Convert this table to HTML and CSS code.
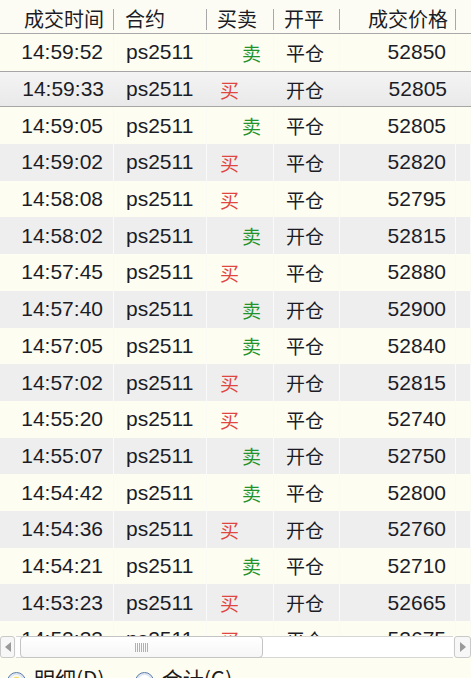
FILE: index.html
```html
<!DOCTYPE html>
<html>
<head>
<meta charset="utf-8">
<link rel="stylesheet" href="styles.css">
</head>
<body>
<div class="panel">
  <div class="row head">
    <div class="c c1"><span class="cn">成交时间</span></div>
    <div class="c c2"><span class="cn">合约</span></div>
    <div class="c c3"><span class="cn">买卖</span></div>
    <div class="c c4"><span class="cn">开平</span></div>
    <div class="c c5"><span class="cn">成交价格</span></div>
    <div class="c c6"></div>
  </div>
  <div class="body">
    <div class="row odd"><div class="c c1">14:59:52</div><div class="c c2">ps2511</div><div class="c c3 sell">卖</div><div class="c c4">平仓</div><div class="c c5">52850</div><div class="c c6"></div></div>
    <div class="row even sel"><div class="c c1">14:59:33</div><div class="c c2">ps2511</div><div class="c c3 buy">买</div><div class="c c4">开仓</div><div class="c c5">52805</div><div class="c c6"></div></div>
    <div class="row odd"><div class="c c1">14:59:05</div><div class="c c2">ps2511</div><div class="c c3 sell">卖</div><div class="c c4">平仓</div><div class="c c5">52805</div><div class="c c6"></div></div>
    <div class="row even"><div class="c c1">14:59:02</div><div class="c c2">ps2511</div><div class="c c3 buy">买</div><div class="c c4">平仓</div><div class="c c5">52820</div><div class="c c6"></div></div>
    <div class="row odd"><div class="c c1">14:58:08</div><div class="c c2">ps2511</div><div class="c c3 buy">买</div><div class="c c4">平仓</div><div class="c c5">52795</div><div class="c c6"></div></div>
    <div class="row even"><div class="c c1">14:58:02</div><div class="c c2">ps2511</div><div class="c c3 sell">卖</div><div class="c c4">开仓</div><div class="c c5">52815</div><div class="c c6"></div></div>
    <div class="row odd"><div class="c c1">14:57:45</div><div class="c c2">ps2511</div><div class="c c3 buy">买</div><div class="c c4">平仓</div><div class="c c5">52880</div><div class="c c6"></div></div>
    <div class="row even"><div class="c c1">14:57:40</div><div class="c c2">ps2511</div><div class="c c3 sell">卖</div><div class="c c4">开仓</div><div class="c c5">52900</div><div class="c c6"></div></div>
    <div class="row odd"><div class="c c1">14:57:05</div><div class="c c2">ps2511</div><div class="c c3 sell">卖</div><div class="c c4">平仓</div><div class="c c5">52840</div><div class="c c6"></div></div>
    <div class="row even"><div class="c c1">14:57:02</div><div class="c c2">ps2511</div><div class="c c3 buy">买</div><div class="c c4">开仓</div><div class="c c5">52815</div><div class="c c6"></div></div>
    <div class="row odd"><div class="c c1">14:55:20</div><div class="c c2">ps2511</div><div class="c c3 buy">买</div><div class="c c4">平仓</div><div class="c c5">52740</div><div class="c c6"></div></div>
    <div class="row even"><div class="c c1">14:55:07</div><div class="c c2">ps2511</div><div class="c c3 sell">卖</div><div class="c c4">开仓</div><div class="c c5">52750</div><div class="c c6"></div></div>
    <div class="row odd"><div class="c c1">14:54:42</div><div class="c c2">ps2511</div><div class="c c3 sell">卖</div><div class="c c4">平仓</div><div class="c c5">52800</div><div class="c c6"></div></div>
    <div class="row even"><div class="c c1">14:54:36</div><div class="c c2">ps2511</div><div class="c c3 buy">买</div><div class="c c4">开仓</div><div class="c c5">52760</div><div class="c c6"></div></div>
    <div class="row odd"><div class="c c1">14:54:21</div><div class="c c2">ps2511</div><div class="c c3 sell">卖</div><div class="c c4">平仓</div><div class="c c5">52710</div><div class="c c6"></div></div>
    <div class="row even"><div class="c c1">14:53:23</div><div class="c c2">ps2511</div><div class="c c3 buy">买</div><div class="c c4">开仓</div><div class="c c5">52665</div><div class="c c6"></div></div>
    <div class="row odd"><div class="c c1">14:52:33</div><div class="c c2">ps2511</div><div class="c c3 buy">买</div><div class="c c4">平仓</div><div class="c c5">52675</div><div class="c c6"></div></div>
  </div>
  <div class="hscroll">
    <div class="sbtn left"><svg width="8" height="12" viewBox="0 0 8 12"><path d="M7 1 L1 6 L7 11 Z" fill="#9a9a9a"/></svg></div>
    <div class="track">
      <div class="thumb"><span class="grip"></span></div>
    </div>
    <div class="sbtn right"><svg width="8" height="12" viewBox="0 0 8 12"><path d="M1 1 L7 6 L1 11 Z" fill="#9a9a9a"/></svg></div>
  </div>
  <div class="radios">
    <label class="radio"><span class="dot on"></span><span class="cn">明细(D)</span></label>
    <label class="radio"><span class="dot"></span><span class="cn">合计(G)</span></label>
  </div>
</div>
</body>
</html>
```

FILE: styles.css
```css
html, body {
  margin: 0;
  padding: 0;
  background: #fdfdf2;
  overflow: hidden;
}
.panel {
  width: 471px;
  height: 678px;
  overflow: hidden;
  display: flex;
  flex-direction: column;
  font-family: "Liberation Sans", Arial, "Noto Sans CJK SC", sans-serif;
  font-size: 21px;
  color: #1c1c26;
}
.cn {
  font-family: "Noto Sans CJK SC", sans-serif;
  font-size: 20px;
}
.row {
  display: grid;
  grid-template-columns: 114px 93px 67px 66px 116px 15px;
  height: 36.7px;
  align-items: stretch;
}
.c {
  display: flex;
  align-items: center;
  white-space: nowrap;
  overflow: hidden;
  box-sizing: border-box;
}
.c1 { justify-content: flex-end; padding-right: 10px; }
.c2 { padding-left: 12px; }
.c3 { padding-left: 13px; font-family: "Noto Sans CJK SC", sans-serif; font-size: 19px; }
.c4 { padding-left: 12px; font-family: "Noto Sans CJK SC", sans-serif; font-size: 19px; }
.c5 { justify-content: flex-end; padding-right: 9px; }
.c3.sell { padding-left: 35px; color: #22932a; }
.c3.buy { color: #e0453f; }

.head {
  background: #fcfcf5;
  height: 38px;
  border-bottom: 1px solid #a9a9a9;
  box-sizing: border-box;
}
.head .c { position: relative; padding-top: 4px; }
.head .c2 { padding-left: 11px; }
.head .c3 { padding-left: 10px; }
.head .c4 { padding-left: 10px; }
.head .c5 { padding-right: 8px; }
.head .c::after {
  content: "";
  position: absolute;
  right: 0;
  top: 9px;
  height: 21px;
  width: 1px;
  background: #a8a8a8;
}
.head .c6::after { display: none; }

.body {
  height: 602px;
  overflow: hidden;
  flex: none;
}
.odd { background: #fdfdf2; }
.even { background: #eeeeee; }
.even .c { border-right: 1px solid #fafafa; }
.odd .c { border-right: 1px solid #fbfbf5; }
.sel {
  background: linear-gradient(#f4f4f4, #e9e9e9);
  box-shadow: inset 0 1px 0 #a6a6a6, inset 0 -1px 0 #a6a6a6;
}
.sel .c { border-right: none; }

.hscroll {
  height: 22px;
  flex: none;
  display: flex;
  align-items: stretch;
  background: #fdfdf2;
}
.sbtn {
  width: 15px;
  display: flex;
  align-items: center;
  justify-content: center;
  box-sizing: border-box;
  border: 1px solid #c9c9c9;
  border-radius: 3px;
  background: #f7f7f7;
}
.sbtn.right { width: 17px; }
.track {
  flex: 1;
  display: flex;
  align-items: stretch;
  padding-left: 4px;
  border-top: 1px solid #d6d6d6;
  border-bottom: 1px solid #d6d6d6;
  background: #ffffff;
  margin: 0 1px;
}
.thumb {
  width: 243px;
  box-sizing: border-box;
  border: 1px solid #c4c4c4;
  border-radius: 4px;
  background: linear-gradient(#ffffff, #f6f6f6);
  display: flex;
  align-items: center;
  justify-content: center;
  margin: -1px 0;
}
.grip {
  width: 13px;
  height: 9px;
  background: repeating-linear-gradient(90deg, #b0b0b0 0 1px, transparent 1px 2px);
}

.radios {
  flex: none;
  display: flex;
  padding-left: 7px;
  padding-top: 8px;
  height: 30px;
}
.radio {
  display: flex;
  align-items: center;
  gap: 8px;
  height: 24px;
}
.radio + .radio { margin-left: 30px; }
.radio .cn { font-size: 21px; color: #1a1a1a; }
.dot {
  width: 17px;
  height: 17px;
  border-radius: 50%;
  border: 1px solid #5a7aa8;
  background: radial-gradient(circle, #f2d860 0 4px, #fbf6d8 5px, #ffffff 7px);
  box-shadow: inset 0 0 0 2px #dde6f2;
  margin-top: 6px;
}
.dot:not(.on) { background: #fff; }
```
